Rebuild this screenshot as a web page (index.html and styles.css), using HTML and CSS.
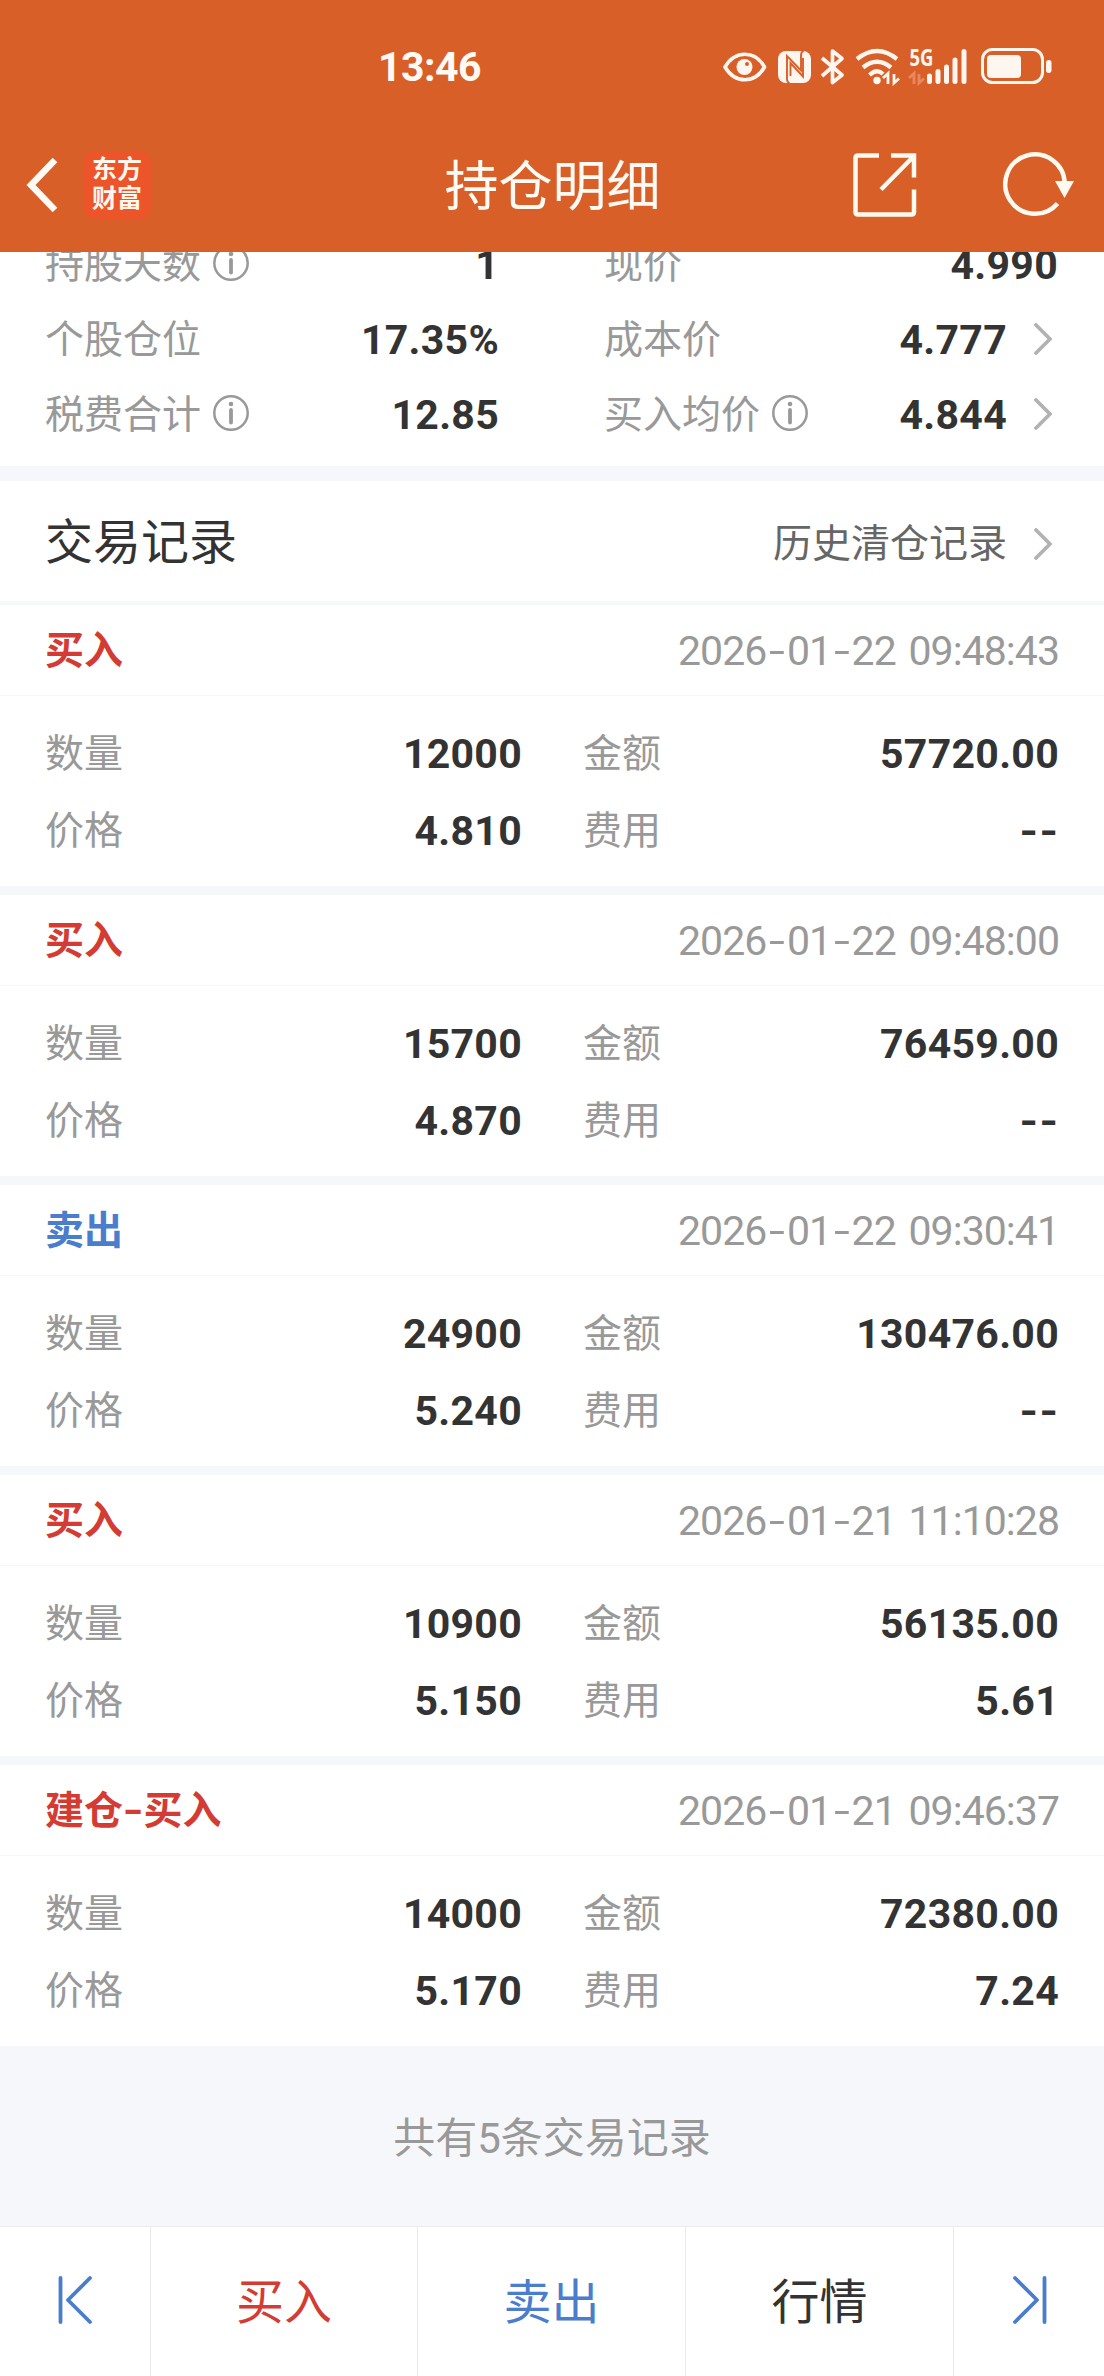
FILE: index.html
```html
<!DOCTYPE html>
<html lang="zh-CN">
<head>
<meta charset="utf-8">
<title>持仓明细</title>
<link rel="stylesheet" href="styles.css">
</head>
<body>
<svg class="defs" width="0" height="0" aria-hidden="true">
  <symbol id="info" viewBox="0 0 36 36"><circle cx="18" cy="18" r="16.7" fill="none" stroke="currentColor" stroke-width="2.5"/><circle cx="18" cy="9" r="2.3" fill="currentColor"/><path d="M18 15V27.5" stroke="currentColor" stroke-width="3.8" stroke-linecap="round"/></symbol>
  <symbol id="chev" viewBox="0 0 18 32"><path d="M2 2L16 16L2 30" fill="none" stroke="currentColor" stroke-width="3.8" stroke-linecap="round" stroke-linejoin="round"/></symbol>
</svg>
<header class="top">
  <div class="status">
    <span class="clock">13:46</span>
    <svg class="status-icons" width="330" height="40" viewBox="722 46 330 40" fill="none" stroke="#fff6f0">
      <path d="M725 67C735 50 755 50 764.500 67C755 84 735 84 725 67Z" stroke-width="3.600"/>
      <circle cx="744.500" cy="67" r="8" fill="#fff6f0" stroke="none"/><circle cx="747" cy="64" r="2" fill="#d85f28" stroke="none"/>
      <rect x="778" y="51" width="33" height="32" rx="8" fill="#fff6f0" stroke="none"/>
      <path d="M788 83.500Q785.500 82 785.500 79V56L799.500 70.500V55.500Q799.500 52 802 50.500" stroke="#d85f28" stroke-width="1.900" transform="translate(1.500 0)"/>
      <path d="M790.500 76V63L803 76.500V58" stroke="#d85f28" stroke-width="1.900"/>
      <path d="M822 58L842 75L832.500 82.500V51L842 58.500L822 76" stroke-width="3.700" stroke-linejoin="round"/>
      <path d="M857 59Q877 43 897 59M863 67.500Q877 56 891 67.500M869.500 75Q877 68 883 74" stroke-width="4.300"/><circle cx="877" cy="80.500" r="3.700" fill="#fff6f0" stroke="none"/>
      <path d="M883 78L888 73.500V84M894 74V83L899 78.500" stroke-width="2.800"/>
      <path d="M909 78L914 73.500V84M919 74V83L924 78.500" stroke="#eb8760" stroke-width="2.800"/>
      <path d="M929.500 76V81.500M938 71.500V81.500M946.500 67V81.500M955 60V81.500M964 51.500V81.500" stroke-width="5" stroke-linecap="round"/>
      <rect x="982.500" y="49.500" width="60" height="33" rx="10" stroke-width="3"/><rect x="987" y="55" width="34" height="23" rx="4" fill="#fff6f0" stroke="none"/><rect x="1046" y="60" width="5.500" height="13" rx="2.700" fill="#fff6f0" stroke="none"/>
      <text class="net" x="909.500" y="66" textLength="24" lengthAdjust="spacingAndGlyphs">5G</text>
    </svg>
  </div>
  <div class="bar">
    <div class="bar-left">
      <svg width="34" height="58" viewBox="0 0 34 58"><path d="M29 4L5 29L29 54" fill="none" stroke="#fffaf3" stroke-width="6.500"/></svg>
      <div class="logo">东方<br>财富</div>
    </div>
    <h1>持仓明细</h1>
    <div class="bar-right">
      <svg width="64" height="64" viewBox="0 0 64 64" fill="none" stroke="#fffaf0" stroke-width="4.500"><path d="M26 2.500H5Q2.500 2.500 2.500 5V59Q2.500 61.500 5 61.500H58.500Q61 61.500 61 59V36.500M38 2.500H61V24.500M28 36.500L60 4"/></svg>
      <svg width="72" height="66" viewBox="0 0 72 66" fill="none"><path d="M54.500 51.500A29.700 29.700 0 1 1 61.700 32" stroke="#fffaf0" stroke-width="4.500"/><path d="M52 29H71L61.500 46Z" fill="#fffaf0"/></svg>
    </div>
  </div>
</header>
<main>
  <section class="summary">
    <div class="sum-grid">
      <div class="cell"><span>持股天数</span><svg class="info"><use href="#info"/></svg><b>1</b></div>
      <div class="cell"><span>现价</span><b>4.990</b></div>
      <div class="cell"><span>个股仓位</span><b>17.35%</b></div>
      <div class="cell"><span>成本价</span><b>4.777</b><svg class="chev"><use href="#chev"/></svg></div>
      <div class="cell"><span>税费合计</span><svg class="info"><use href="#info"/></svg><b>12.85</b></div>
      <div class="cell"><span>买入均价</span><svg class="info"><use href="#info"/></svg><b>4.844</b><svg class="chev"><use href="#chev"/></svg></div>
    </div>
  </section>
  <section class="heading"><h2>交易记录</h2><a>历史清仓记录<svg class="chev"><use href="#chev"/></svg></a></section>
  <section class="records">
    <article>
      <header><strong class="buy">买入</strong><time>2026<i>-</i>01<i>-</i>22 09:48:43</time></header>
      <dl><dt>数量</dt><dd>12000</dd><dt>金额</dt><dd>57720.00</dd><dt>价格</dt><dd>4.810</dd><dt>费用</dt><dd><i>-</i><i>-</i></dd></dl>
    </article>
    <article>
      <header><strong class="buy">买入</strong><time>2026<i>-</i>01<i>-</i>22 09:48:00</time></header>
      <dl><dt>数量</dt><dd>15700</dd><dt>金额</dt><dd>76459.00</dd><dt>价格</dt><dd>4.870</dd><dt>费用</dt><dd><i>-</i><i>-</i></dd></dl>
    </article>
    <article>
      <header><strong class="sell">卖出</strong><time>2026<i>-</i>01<i>-</i>22 09:30:41</time></header>
      <dl><dt>数量</dt><dd>24900</dd><dt>金额</dt><dd>130476.00</dd><dt>价格</dt><dd>5.240</dd><dt>费用</dt><dd><i>-</i><i>-</i></dd></dl>
    </article>
    <article>
      <header><strong class="buy">买入</strong><time>2026<i>-</i>01<i>-</i>21 11:10:28</time></header>
      <dl><dt>数量</dt><dd>10900</dd><dt>金额</dt><dd>56135.00</dd><dt>价格</dt><dd>5.150</dd><dt>费用</dt><dd>5.61</dd></dl>
    </article>
    <article>
      <header><strong class="buy">建仓<i>-</i>买入</strong><time>2026<i>-</i>01<i>-</i>21 09:46:37</time></header>
      <dl><dt>数量</dt><dd>14000</dd><dt>金额</dt><dd>72380.00</dd><dt>价格</dt><dd>5.170</dd><dt>费用</dt><dd>7.24</dd></dl>
    </article>
  </section>
  <p class="total">共有5条交易记录</p>
</main>
<nav>
  <a class="sell"><svg width="36" height="50" viewBox="0 0 36 50"><path d="M3.500 3V47M33 3L11 25L33 47"/></svg></a>
  <a class="buy">买入</a>
  <a class="sell">卖出</a>
  <a>行情</a>
  <a class="sell"><svg width="36" height="50" viewBox="0 0 36 50"><path d="M33.500 3V47M4 3L26 25L4 47"/></svg></a>
</nav>
</body>
</html>
```
FILE: styles.css
```css
* { box-sizing: border-box; margin: 0; padding: 0; }
body {
  width: 1104px; height: 2376px; overflow: hidden;
  display: flex; flex-direction: column;
  background: #fff; color: #333;
  font-family: Roboto, "Noto Sans CJK SC", sans-serif;
  font-size: 39px; line-height: 1;
}
.defs { display: block; height: 0; }
h1, h2 { font-weight: 400; }

.top { height: 252px; flex: none; background: #d85f28; color: #fffaf3; position: relative; z-index: 1; }
.status { height: 118px; padding: 46px 52px 0 378px; display: flex; justify-content: space-between; }
.clock { font-size: 41px; line-height: 43px; font-weight: 700; letter-spacing: -0.5px; }
.status-icons { display: block; }
.net { font: 700 23px "Open Sans", sans-serif; fill: #fff6f0; stroke: none; }
.bar { height: 134px; padding: 0 29px 0 26px; display: grid; grid-template-columns: 1fr auto 1fr; align-items: center; }
.bar-left { display: flex; align-items: center; gap: 23px; }
.bar-right { display: flex; align-items: center; justify-content: flex-end; gap: 86px; }
.logo {
  width: 68px; height: 68px; border-radius: 12px; background: #ec5429;
  padding-top: 2px; text-align: center; color: #fff6ec;
  font: 700 25px/29px "Noto Sans CJK SC", sans-serif;
}
h1 { font-size: 54px; padding: 5px 0 0 2px; margin-right: -2px; }

.summary { height: 214px; overflow: hidden; }
.sum-grid {
  margin-top: -26px; padding: 0 46px 0 45px;
  display: grid; grid-template-columns: 454px 454px; column-gap: 105px;
  grid-auto-rows: 75px; color: #999;
}
.cell { display: flex; align-items: center; }
.cell span { padding-top: 4px; }
.cell b { margin-left: auto; padding-top: 3px; }
.info { width: 36px; height: 36px; margin: 0 0 1px 12px; }
.chev { width: 18px; height: 32px; color: #b2b2b2; flex: none; margin: 0 6px 0 27px; }
b, dd { color: #333; font-size: 41px; font-weight: 700; letter-spacing: 0.3px; }

.heading {
  height: 139px; border-top: 15px solid #f6f7fa; border-bottom: 4px solid #f6f7fa;
  padding: 3px 46px 0 45px; display: flex; align-items: center; justify-content: space-between;
}
h2 { font-size: 48px; }
.heading a { display: flex; align-items: center; color: #666; margin-top: 3px; }

.records { display: flex; flex-direction: column; gap: 9px; background: #f6f7fa; }
article { height: 281px; background: #fff; }
article header {
  height: 91px; padding: 2px 45px 0 45px; border-bottom: 1px solid #f6f7f8;
  display: flex; align-items: center; justify-content: space-between;
}
.buy { color: #d43c33; }
.sell { color: #4a7dcc; }
time { color: #999; font-size: 41px; letter-spacing: -0.95px; word-spacing: 3.5px; white-space: pre; }
i { display: inline-block; width: 20.5px; text-align: center; font-style: normal; transform: scaleX(1.4); }
dd i { transform: scaleX(1.15); width: 20px; }
dl {
  padding: 20px 45px 0 45px;
  display: grid; grid-template-columns: 100px 377px 161px 376px;
  grid-auto-rows: 77px; align-items: center; color: #999;
}
dd { text-align: right; }
dt:nth-of-type(even) { padding-left: 61px; }

.total { height: 180px; background: #f6f7fa; color: #999; font-size: 42px; line-height: 186px; text-align: center; }
nav {
  height: 150px; border-top: 1px solid #ebebeb; background: #fff; font-size: 48px;
  display: grid; grid-template-columns: 151px 267px 268px 268px 150px;
}
nav a { display: flex; align-items: center; justify-content: center; padding-top: 2px; border-right: 1px solid #ebebeb; }
nav a:last-child { border-right: 0; }
nav svg { fill: none; stroke: currentColor; stroke-width: 3.8; stroke-linecap: round; stroke-linejoin: round; margin-bottom: 6px; }
```
